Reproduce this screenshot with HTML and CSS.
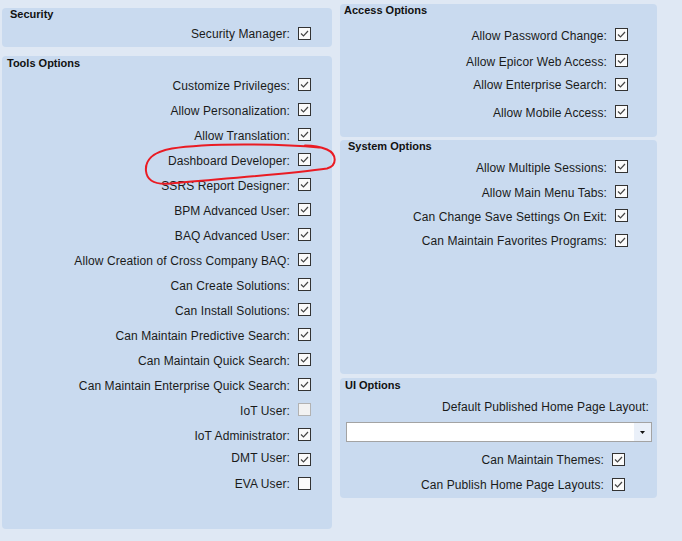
FILE: index.html
```html
<!DOCTYPE html>
<html>
<head>
<meta charset="utf-8">
<link rel="stylesheet" href="styles.css">
</head>
<body>
<div class="page">
  <div class="col col-left">
    <section class="panel panel-security">
      <div class="title pl-8">Security</div>
      <div class="rows rows-left mt-1">
        <div class="row h24"><span class="lbl">Security Manager:</span><span class="cb on"><svg viewBox="0 0 11 11"><polyline points="2,5.5 4.5,8 9,3"/></svg></span></div>
      </div>
    </section>
    <section class="panel panel-tools">
      <div class="title low pl-5">Tools Options</div>
      <div class="rows rows-left mt-3">
        <div class="row"><span class="lbl">Customize Privileges:</span><span class="cb on"><svg viewBox="0 0 11 11"><polyline points="2,5.5 4.5,8 9,3"/></svg></span></div>
        <div class="row"><span class="lbl">Allow Personalization:</span><span class="cb on"><svg viewBox="0 0 11 11"><polyline points="2,5.5 4.5,8 9,3"/></svg></span></div>
        <div class="row"><span class="lbl">Allow Translation:</span><span class="cb on"><svg viewBox="0 0 11 11"><polyline points="2,5.5 4.5,8 9,3"/></svg></span></div>
        <div class="row"><span class="lbl">Dashboard Developer:</span><span class="cb on"><svg viewBox="0 0 11 11"><polyline points="2,5.5 4.5,8 9,3"/></svg></span></div>
        <div class="row"><span class="lbl">SSRS Report Designer:</span><span class="cb on"><svg viewBox="0 0 11 11"><polyline points="2,5.5 4.5,8 9,3"/></svg></span></div>
        <div class="row"><span class="lbl">BPM Advanced User:</span><span class="cb on"><svg viewBox="0 0 11 11"><polyline points="2,5.5 4.5,8 9,3"/></svg></span></div>
        <div class="row"><span class="lbl">BAQ Advanced User:</span><span class="cb on"><svg viewBox="0 0 11 11"><polyline points="2,5.5 4.5,8 9,3"/></svg></span></div>
        <div class="row"><span class="lbl">Allow Creation of Cross Company BAQ:</span><span class="cb on"><svg viewBox="0 0 11 11"><polyline points="2,5.5 4.5,8 9,3"/></svg></span></div>
        <div class="row"><span class="lbl">Can Create Solutions:</span><span class="cb on"><svg viewBox="0 0 11 11"><polyline points="2,5.5 4.5,8 9,3"/></svg></span></div>
        <div class="row"><span class="lbl">Can Install Solutions:</span><span class="cb on"><svg viewBox="0 0 11 11"><polyline points="2,5.5 4.5,8 9,3"/></svg></span></div>
        <div class="row"><span class="lbl">Can Maintain Predictive Search:</span><span class="cb on"><svg viewBox="0 0 11 11"><polyline points="2,5.5 4.5,8 9,3"/></svg></span></div>
        <div class="row"><span class="lbl">Can Maintain Quick Search:</span><span class="cb on"><svg viewBox="0 0 11 11"><polyline points="2,5.5 4.5,8 9,3"/></svg></span></div>
        <div class="row"><span class="lbl">Can Maintain Enterprise Quick Search:</span><span class="cb on"><svg viewBox="0 0 11 11"><polyline points="2,5.5 4.5,8 9,3"/></svg></span></div>
        <div class="row"><span class="lbl">IoT User:</span><span class="cb disabled"></span></div>
        <div class="row"><span class="lbl">IoT Administrator:</span><span class="cb on"><svg viewBox="0 0 11 11"><polyline points="2,5.5 4.5,8 9,3"/></svg></span></div>
        <div class="row h20"><span class="lbl">DMT User:</span><span class="cb on low"><svg viewBox="0 0 11 11"><polyline points="2,5.5 4.5,8 9,3"/></svg></span></div>
        <div class="row h32"><span class="lbl">EVA User:</span><span class="cb"></span></div>
      </div>
    </section>
  </div>

  <div class="col col-right">
    <section class="panel panel-access">
      <div class="title pl-4">Access Options</div>
      <div class="rows rows-right mt-6">
        <div class="row"><span class="lbl">Allow Password Change:</span><span class="cb on"><svg viewBox="0 0 11 11"><polyline points="2,5.5 4.5,8 9,3"/></svg></span></div>
        <div class="row h27"><span class="lbl">Allow Epicor Web Access:</span><span class="cb on"><svg viewBox="0 0 11 11"><polyline points="2,5.5 4.5,8 9,3"/></svg></span></div>
        <div class="row h20"><span class="lbl">Allow Enterprise Search:</span><span class="cb on"><svg viewBox="0 0 11 11"><polyline points="2,5.5 4.5,8 9,3"/></svg></span></div>
        <div class="row h35"><span class="lbl">Allow Mobile Access:</span><span class="cb on"><svg viewBox="0 0 11 11"><polyline points="2,5.5 4.5,8 9,3"/></svg></span></div>
      </div>
    </section>
    <section class="panel panel-system">
      <div class="title pl-8">System Options</div>
      <div class="rows rows-right mt-2">
        <div class="row"><span class="lbl">Allow Multiple Sessions:</span><span class="cb on"><svg viewBox="0 0 11 11"><polyline points="2,5.5 4.5,8 9,3"/></svg></span></div>
        <div class="row"><span class="lbl">Allow Main Menu Tabs:</span><span class="cb on"><svg viewBox="0 0 11 11"><polyline points="2,5.5 4.5,8 9,3"/></svg></span></div>
        <div class="row h23"><span class="lbl">Can Change Save Settings On Exit:</span><span class="cb on"><svg viewBox="0 0 11 11"><polyline points="2,5.5 4.5,8 9,3"/></svg></span></div>
        <div class="row h26"><span class="lbl">Can Maintain Favorites Programs:</span><span class="cb on"><svg viewBox="0 0 11 11"><polyline points="2,5.5 4.5,8 9,3"/></svg></span></div>
      </div>
    </section>
    <section class="panel panel-ui">
      <div class="title low pl-5">UI Options</div>
      <div class="row h20 label-row mt-5"><span class="lbl">Default Published Home Page Layout:</span></div>
      <div class="select">
        <div class="select-btn"><svg width="5" height="3" viewBox="0 0 5 3"><polygon points="0,0 5,0 2.5,3"/></svg></div>
      </div>
      <div class="rows rows-ui mt-5">
        <div class="row h24"><span class="lbl">Can Maintain Themes:</span><span class="cb on"><svg viewBox="0 0 11 11"><polyline points="2,5.5 4.5,8 9,3"/></svg></span></div>
        <div class="row h26"><span class="lbl">Can Publish Home Page Layouts:</span><span class="cb on"><svg viewBox="0 0 11 11"><polyline points="2,5.5 4.5,8 9,3"/></svg></span></div>
      </div>
    </section>
  </div>
</div>

<svg class="annotation" width="682" height="541" viewBox="0 0 682 541">
  <path d="M 319 147.5 C 282 143.5, 205 143, 172 148.5 C 152 152, 145 161, 146 171 C 147 181, 156 185, 171 183.5 C 220 179, 290 174, 327 168.5 C 337.5 165.5, 337 154, 327 149.5 C 321 147, 313 145.5, 305 145.5"/>
</svg>
</body>
</html>
```

FILE: styles.css
```css
* {
  box-sizing: border-box;
}

body {
  margin: 0;
  width: 682px;
  height: 541px;
  overflow: hidden;
  position: relative;
  background: #dfe8f4;
  font-family: "Liberation Sans", Arial, sans-serif;
  color: #1a1a1a;
}

.page {
  display: flex;
  gap: 8px;
  padding-left: 2px;
}

.col {
  display: flex;
  flex-direction: column;
}

.col-left {
  width: 330px;
  margin-top: 8px;
  gap: 9px;
}

.col-right {
  width: 317px;
  margin-top: 4px;
  gap: 3px;
}

.panel {
  background: #c9daef;
  border-radius: 4px;
}

.panel-security { height: 39px; }
.panel-tools { height: 473px; }
.panel-access { height: 133px; }
.panel-system { height: 234px; }
.panel-ui { height: 120px; margin-top: 1px; }

.title {
  font-weight: bold;
  font-size: 11px;
  line-height: 11px;
  padding-top: 1px;
  color: #111;
}

.title.low { padding-top: 2px; }

.pl-4 { padding-left: 4px; }
.pl-5 { padding-left: 5px; }
.pl-8 { padding-left: 8px; }

.mt-1 { margin-top: 1px; }
.mt-2 { margin-top: 2px; }
.mt-3 { margin-top: 3px; }
.mt-5 { margin-top: 5px; }
.mt-6 { margin-top: 6px; }

.rows {
  display: flex;
  flex-direction: column;
}

.rows-left { padding-right: 21px; }
.rows-right { padding-right: 29px; }
.rows-ui { padding-right: 32px; }

.row {
  display: flex;
  align-items: center;
  justify-content: flex-end;
  height: 25px;
  font-size: 12px;
  line-height: 14px;
  letter-spacing: 0.1px;
  white-space: nowrap;
}

.lbl {
  padding-top: 2px;
}

.row.h20 { height: 20px; }
.row.h23 { height: 23px; }
.row.h24 { height: 24px; }
.row.h26 { height: 26px; }
.row.h27 { height: 27px; }
.row.h32 { height: 32px; }
.row.h35 { height: 35px; }

.label-row { padding-right: 8px; }

.cb {
  flex: none;
  width: 13px;
  height: 13px;
  margin-left: 8px;
  border: 1px solid #333;
  background: #fafafa;
  display: block;
}

.cb svg {
  display: block;
  width: 11px;
  height: 11px;
}

.cb polyline {
  fill: none;
  stroke: #454545;
  stroke-width: 1.2;
}

.cb.low { margin-top: 5px; }

.cb.disabled {
  border-color: #b2b2b2;
  background: #f2f2f2;
}

.select {
  margin: 6px 5px 0 6px;
  height: 20px;
  border: 1px solid #a3a3a3;
  background: #fff;
  display: flex;
  justify-content: flex-end;
}

.select-btn {
  width: 17px;
  background: #eaf0f9;
  display: flex;
  align-items: center;
  justify-content: center;
}

.select-btn svg {
  display: block;
}

.select-btn polygon {
  fill: #111;
}

.annotation {
  position: absolute;
  left: 0;
  top: 0;
  pointer-events: none;
}

.annotation path {
  fill: none;
  stroke: #ea1b23;
  stroke-width: 2;
  stroke-linecap: round;
  stroke-linejoin: round;
}
```
